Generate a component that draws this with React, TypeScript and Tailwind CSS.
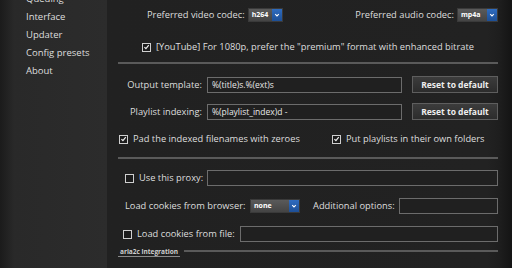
import React from "react";

const font = { fontFamily: '"Open Sans", "Noto Sans", sans-serif' };

function Check({ checked }: { checked?: boolean }) {
  return (
    <span className="inline-flex items-center justify-center w-[9px] h-[9px] border border-[#cfcfcf] bg-[#1c1c1c] shrink-0">
      {checked && (
        <svg viewBox="0 0 10 10" className="w-[8px] h-[8px]">
          <path d="M2 5.2 L4.2 7.4 L8.2 2.4" stroke="#f0f0f0" strokeWidth="1.7" fill="none" />
        </svg>
      )}
    </span>
  );
}

function Select({ value, w }: { value: string; w: string }) {
  return (
    <div className={`flex h-[14px] ${w} border border-[#3a3a3a] shrink-0`}>
      <div className="flex-1 bg-[linear-gradient(#5a5a5a,#444)] text-[7px] leading-[12px] font-bold text-white pl-[3px]">{value}</div>
      <div className="w-[10px] bg-[linear-gradient(#2f6cc0,#1d4f96)] flex items-center justify-center">
        <svg viewBox="0 0 10 10" className="w-[6px] h-[6px]">
          <path d="M2 3.5 L5 6.5 L8 3.5" stroke="#fff" strokeWidth="1.8" fill="none" />
        </svg>
      </div>
    </div>
  );
}

function Input({ value, className }: { value?: string; className: string }) {
  return (
    <div className={`h-[16px] border border-[#6c6c6c] bg-[#202020] text-[8.5px] leading-[14px] text-[#e8e8e8] pl-[4px] whitespace-nowrap ${className}`}>
      {value}
    </div>
  );
}

function ResetButton() {
  return (
    <div className="w-[86px] h-[17px] border border-[#5e5e5e] bg-[linear-gradient(#3c3c3c,#2c2c2c)] text-[8.5px] leading-[15px] font-bold text-[#eeeeee] text-center whitespace-nowrap">
      Reset to default
    </div>
  );
}

function Separator() {
  return <div className="h-[2px] bg-[#5a5a5a]" />;
}

export default function App() {
  const side = ["Queuing", "Interface", "Updater", "Config presets", "About"];
  return (
    <div className="flex w-[512px] h-[268px] overflow-hidden text-[#dedede] text-[9.3px] whitespace-nowrap" style={font}>
      <div className="w-[107px] shrink-0 bg-[linear-gradient(to_right,#1b1b1b,#292929_14px,#2c2c2c)]">
        <div className="-mt-[10px] pl-[26px] text-[9.5px]">
          {side.map((s) => (
            <div key={s} className="h-[18px] leading-[18px]">
              {s}
            </div>
          ))}
        </div>
      </div>
      <div className="flex-1 bg-[linear-gradient(to_right,#212121,#222_380px,#1e1e1e_392px,#141414)] pl-[11px] pr-[14px] pt-[8px]">
        <div className="flex items-center h-[14px]">
          <span className="ml-[29px] mr-[3px]">Preferred video codec:</span>
          <Select value="h264" w="w-[35px]" />
          <span className="ml-auto mr-[3px]">Preferred audio codec:</span>
          <Select value="mp4a" w="w-[41px]" />
        </div>
        <div className="flex items-center h-[14px] mt-[18px] ml-[24px] gap-[5px]">
          <Check checked />
          <span>[YouTube] For 1080p, prefer the "premium" format with enhanced bitrate</span>
        </div>
        <div className="mt-[8px]">
          <Separator />
        </div>
        <div className="flex items-center mt-[12px]">
          <span className="w-[84px] text-right">Output template:</span>
          <Input value="%(title)s.%(ext)s" className="ml-[5px] w-[195px]" />
          <div className="ml-[10px]">
            <ResetButton />
          </div>
        </div>
        <div className="flex items-center mt-[10px]">
          <span className="w-[84px] text-right">Playlist indexing:</span>
          <Input value="%(playlist_index)d -" className="ml-[5px] w-[195px]" />
          <div className="ml-[10px]">
            <ResetButton />
          </div>
        </div>
        <div className="flex items-center h-[14px] mt-[12px]">
          <div className="w-[214px] pl-[1px] flex items-center gap-[5px]">
            <Check checked />
            <span>Pad the indexed filenames with zeroes</span>
          </div>
          <div className="flex items-center gap-[5px]">
            <Check checked />
            <span>Put playlists in their own folders</span>
          </div>
        </div>
        <div className="mt-[11px]">
          <Separator />
        </div>
        <div className="flex items-center mt-[11px] pl-[7px]">
          <div className="w-[82px] flex items-center gap-[5px]">
            <Check />
            <span>Use this proxy:</span>
          </div>
          <Input className="flex-1" />
        </div>
        <div className="flex items-center mt-[12px] pl-[7px]">
          <span className="w-[125px]">Load cookies from browser:</span>
          <Select value="none" w="w-[50px]" />
          <span className="ml-[13px] w-[86px]">Additional options:</span>
          <Input className="flex-1" />
        </div>
        <div className="flex items-center mt-[12px] pl-[5px]">
          <div className="w-[117px] flex items-center gap-[5px]">
            <Check />
            <span>Load cookies from file:</span>
          </div>
          <Input className="flex-1" />
        </div>
        <div className="flex items-center mt-[5px] h-[10px]">
          <span className="text-[6.5px] font-bold text-[#cfcfcf] border-b border-[#8a8a8a] leading-[8px] pl-[2px] pr-[2px]">
            aria2c integration
          </span>
          <div className="flex-1 h-[2px] bg-[#5a5a5a] ml-[4px] -mt-[2px]" />
        </div>
      </div>
    </div>
  );
}
